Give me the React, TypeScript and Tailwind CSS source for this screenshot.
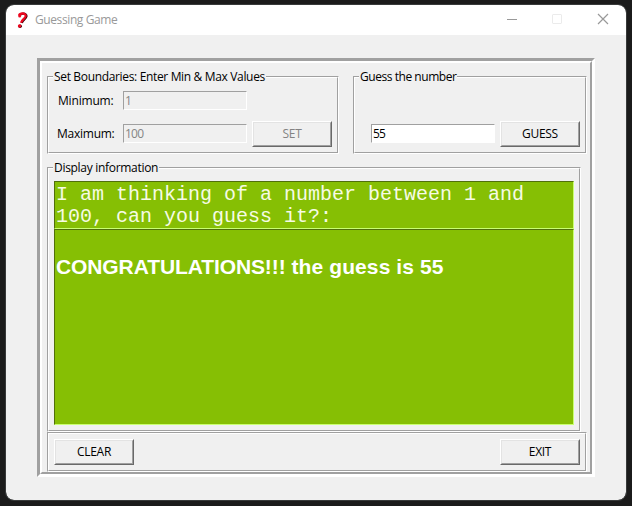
import type { ReactNode } from "react";

const groove =
  "border border-t-[#a0a0a0] border-l-[#a0a0a0] border-b-white border-r-white";
const grooveInner =
  "h-full border border-t-white border-l-white border-b-[#a0a0a0] border-r-[#a0a0a0]";

function Group({ title, titleClass = "", className, children }: { title?: string; titleClass?: string; className: string; children: ReactNode }) {
  return (
    <section className={`relative ${groove} ${className}`}>
      <div className={grooveInner}>{children}</div>
      {title && (
        <h2 className={`absolute left-[5px] -top-[9px] h-[17px] whitespace-nowrap bg-[#f0f0f0] px-px leading-[17px] ${titleClass}`}>
          {title}
        </h2>
      )}
    </section>
  );
}

function PushButton({ label, disabled = false, className = "" }: { label: string; disabled?: boolean; className?: string }) {
  return (
    <button
      disabled={disabled}
      className={`block h-[26px] w-[80px] shrink-0 border border-t-white border-l-white border-b-[#696969] border-r-[#696969] ${className}`}
    >
      <span
        className={`flex h-full items-center justify-center border border-t-[#e3e3e3] border-l-[#e3e3e3] border-b-[#a0a0a0] border-r-[#a0a0a0] tracking-[-0.3px] ${disabled ? "text-[#838383]" : "text-black"}`}
      >
        {label}
      </span>
    </button>
  );
}

function Field({ value, className = "" }: { value: string; className?: string }) {
  return (
    <div className={`h-[19px] w-[124px] shrink-0 border border-t-[#a0a0a0] border-l-[#a0a0a0] border-b-white border-r-white pl-px leading-[18px] tracking-[-0.75px] ${className}`}>
      {value}
    </div>
  );
}

export default function App() {
  return (
    <div className="h-[506px] w-[632px] overflow-hidden bg-[#1b1b1b] pt-[5px] pl-[6px] font-['Open_Sans','Noto_Sans',sans-serif] text-[12px] text-black">
      <main className="h-[495px] w-[620px] overflow-hidden rounded-[8px] bg-[#f0f0f0] outline outline-[#383a3a]">
        <header className="flex h-[30px] items-center bg-white">
          <svg className="ml-[11px] h-[17px] w-[12px]" viewBox="0 0 12 17" fill="none">
            <path d="M2.800 3.700C3.500 1.200 9.700.7 9.500 4.200 9.300 6.800 5.700 7.300 4.800 11" stroke="#250006" strokeWidth="2.200" />
            <path d="M2 3.500C2.800 1 8.900.5 8.700 4 8.500 6.600 4.900 7.100 4 10.800" stroke="#ee0820" strokeWidth="2.300" />
            <circle cx="2.700" cy="4" r="1.500" fill="#ee0820" />
            <circle cx="3.100" cy="14.300" r="1.800" fill="#250006" />
            <circle cx="2.600" cy="14" r="1.800" fill="#ee0820" />
          </svg>
          <h1 className="ml-[6px] text-[12px] leading-[18px] tracking-[-0.4px] text-[#999]">Guessing Game</h1>
          <svg className="mt-[-2px] ml-auto h-[12px] w-[103px]" viewBox="0 0 103 12" fill="none">
            <path d="M0 6.5h10" stroke="#999" />
            <rect x="45.5" y="1.5" width="9" height="9" rx=".5" stroke="#ebebeb" />
            <path d="m91 1 10 10m0-10-10 10" stroke="#999" strokeWidth="1.2" />
          </svg>
          <div className="w-[16px]" />
        </header>

        <div className="mt-[23px] ml-[31px] h-[419px] w-[558px] border-[3px] border-t-[#a0a0a0] border-l-[#a0a0a0] border-b-white border-r-white">
          <div className="h-full border-2 border-t-white border-l-white border-b-[#a0a0a0] border-r-[#a0a0a0] pt-[13px] pl-[5px]">
            <div className="flex gap-[14px]">
              <Group title="Set Boundaries: Enter Min & Max Values" titleClass="tracking-[-0.34px]" className="h-[78px] w-[292px]">
                <div className="flex pt-[13px]">
                  <div className="w-[74px] pl-[9px] leading-[20px] tracking-[-0.18px]">Minimum:</div>
                  <Field value="1" className="text-[#858585]" />
                </div>
                <div className="flex pt-[10px]">
                  <div className="mt-[3px] w-[74px] pl-[8px] leading-[20px] tracking-[-0.25px]">Maximum:</div>
                  <Field value="100" className="mt-[3px] text-[#858585]" />
                  <PushButton label="SET" disabled className="ml-[5px]" />
                </div>
              </Group>
              <Group title="Guess the number" titleClass="tracking-[-0.45px]" className="h-[78px] w-[234px]">
                <div className="flex pt-[43px] pl-[16px]">
                  <Field value="55" className="mt-[3px] bg-white" />
                  <PushButton label="GUESS" className="ml-[5px]" />
                </div>
              </Group>
            </div>

            <Group title="Display information" titleClass="tracking-[-0.3px]" className="mt-[13px] h-[265px] w-[534px]">
              <div className="ml-[5px] w-[520px] pt-[12px]">
                <div className="h-[48px] border border-t-[#506f0b] border-l-[#506f0b] border-b-[#caff72] border-r-[#caff72] bg-[#86bf04] pt-[2px] pl-px font-['Courier_New','Liberation_Mono',monospace] text-[20px] leading-[22px] text-[#f6fbe4]">
                  <p className="whitespace-nowrap">I am thinking of a number between 1 and</p>
                  <p className="whitespace-nowrap">100, can you guess it?:</p>
                </div>
                <div className="h-[196px] border border-t-[#506f0b] border-l-[#506f0b] border-b-[#caff72] border-r-[#caff72] bg-[#86bf04] pt-[25px] pl-px font-['Liberation_Sans',sans-serif] text-[21px] font-bold leading-[24px] text-white">
                  <p className="whitespace-nowrap">
                    <span className="tracking-[-0.1px]">CONGRATULATIONS!!!</span>
                    <span className="tracking-[0.1px]"> the guess is 55</span>
                  </p>
                </div>
              </div>
            </Group>

            <Group className="h-[40px] w-[540px]">
              <div className="flex justify-between pt-[5px] pr-[5px] pl-[5px]">
                <PushButton label="CLEAR" />
                <PushButton label="EXIT" />
              </div>
            </Group>
          </div>
        </div>
      </main>
    </div>
  );
}
